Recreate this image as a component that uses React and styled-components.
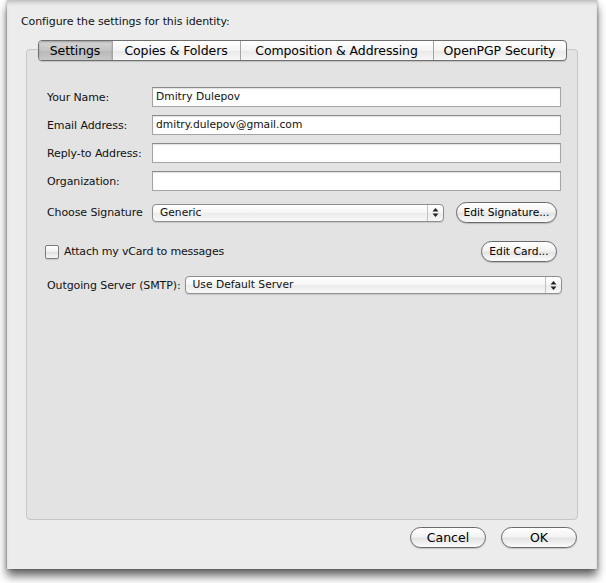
import React from "react";
import styled, { createGlobalStyle } from "styled-components";

const Global = createGlobalStyle`
  html, body { margin: 0; padding: 0; background: #ffffff; }
  body {
    font-family: "DejaVu Sans", "Liberation Sans", sans-serif;
    color: #111;
    min-height: 583px;
    padding-bottom: 14px;
  }
  * { box-sizing: border-box; }
`;

const Sheet = styled.div`
  margin-left: 7px;
  width: 590px;
  height: 569px;
  background: #ececec;
  display: flex;
  flex-direction: column;
  padding: 14px 19px 0 19px;
  box-shadow: 0 7px 9px rgba(0, 0, 0, 0.6), 0 0 3px rgba(0, 0, 0, 0.35),
    inset 0 4px 4px -2px rgba(0, 0, 0, 0.22);
`;

const Heading = styled.div`
  font-size: 11px;
  line-height: 16px;
  margin-left: -5px;
  letter-spacing: -0.1px;
`;

const TabArea = styled.div`
  margin-top: 10px;
  flex: 1;
  display: flex;
  flex-direction: column;
`;

const TabBar = styled.div`
  align-self: center;
  display: flex;
  height: 21px;
  margin-bottom: -12px;
  position: relative;
  z-index: 1;
  border: 1px solid #6f6f6f;
  border-radius: 4px;
  overflow: hidden;
  background: linear-gradient(#ffffff, #f4f4f4 50%, #e9e9e9 51%, #f7f7f7);
  box-shadow: 0 1px 1px rgba(0, 0, 0, 0.15);
`;

const Tab = styled.div`
  display: flex;
  align-items: center;
  justify-content: center;
  width: ${(p) => p.$w}px;
  font-size: 12.5px;
  letter-spacing: -0.1px;
  color: #000;
  white-space: nowrap;
  border-left: ${(p) => (p.$first ? "none" : "1px solid #a6a6a6")};
  ${(p) =>
    p.$active &&
    `
    background: linear-gradient(#d6d6d6, #c4c4c4 50%, #b8b8b8 51%, #c9c9c9);
    box-shadow: inset 0 1px 2px rgba(0,0,0,0.25);
  `}
`;

const Panel = styled.div`
  flex: 1;
  background: #e3e3e3;
  border: 1px solid #c6c6c6;
  border-radius: 4px;
  padding: 37px 18px 0 20px;
  display: flex;
  flex-direction: column;
`;

const FieldGrid = styled.div`
  display: grid;
  grid-template-columns: 105px 1fr;
  row-gap: 8px;
  align-items: center;
  margin-right: -2px;
`;

const Label = styled.div`
  font-size: 11px;
  letter-spacing: -0.1px;
  color: #111;
  white-space: nowrap;
`;

const TextField = styled.div`
  height: 20px;
  background: #fff;
  border: 1px solid #a4a4a4;
  border-top-color: #8a8a8a;
  box-shadow: inset 0 1px 1px rgba(0, 0, 0, 0.12);
  font-size: 10.7px;
  line-height: 18px;
  padding-left: 3px;
`;

const Row = styled.div`
  display: flex;
  align-items: center;
  gap: ${(p) => p.$gap || 0}px;
  margin-top: ${(p) => p.$top}px;
  margin-right: ${(p) => p.$right || 0}px;
`;

const SigLabel = styled(Label)`
  width: 105px;
  flex: none;
`;

const Popup = styled.div`
  height: 18px;
  flex: ${(p) => (p.$grow ? 1 : "none")};
  width: ${(p) => (p.$w ? `${p.$w}px` : "auto")};
  display: flex;
  align-items: stretch;
  border: 1px solid #8e8e8e;
  border-radius: 4px;
  background: linear-gradient(#ffffff, #f6f6f6 50%, #ebebeb 52%, #f8f8f8);
  box-shadow: 0 1px 1px rgba(0, 0, 0, 0.12);
  font-size: 10.7px;
`;

const PopupText = styled.div`
  flex: 1;
  padding-left: 7px;
  line-height: 16px;
`;

const PopupArrows = styled.div`
  width: 16px;
  border-left: 1px solid #c2c2c2;
  display: flex;
  align-items: center;
  justify-content: center;
`;

const PillButton = styled.div`
  height: 21px;
  width: ${(p) => p.$w}px;
  display: flex;
  align-items: center;
  justify-content: center;
  border: 1px solid #6a6a6a;
  border-radius: 11px;
  background: linear-gradient(#ffffff, #f3f3f3 45%, #e4e4e4 55%, #fbfbfb);
  box-shadow: 0 1px 1px rgba(0, 0, 0, 0.18);
  font-size: ${(p) => p.$size || 10.7}px;
  color: #000;
  white-space: nowrap;
  flex: none;
`;

const Spacer = styled.div`
  flex: 1;
`;

const Check = styled.div`
  width: 14px;
  height: 14px;
  margin-left: -2px;
  border: 1px solid #7d7d7d;
  border-radius: 2px;
  background: linear-gradient(#ffffff, #f0f0f0 50%, #e2e2e2 52%, #f6f6f6);
  box-shadow: 0 1px 1px rgba(0, 0, 0, 0.12);
  flex: none;
`;

const CheckLabel = styled.div`
  font-size: 11px;
  letter-spacing: -0.2px;
`;

const Footer = styled.div`
  height: 49px;
  display: flex;
  justify-content: flex-end;
  align-items: flex-start;
  gap: 15px;
  padding-top: 7px;
  padding-right: 1px;
`;

function Arrows() {
  return (
    <svg width="7" height="11" viewBox="0 0 7 11">
      <path d="M3.5 1 L6.5 4.5 L0.5 4.5 Z" fill="#222" />
      <path d="M3.5 10 L6.5 6.5 L0.5 6.5 Z" fill="#222" />
    </svg>
  );
}

const tabs = [
  { name: "Settings", w: 73, active: true },
  { name: "Copies & Folders", w: 128 },
  { name: "Composition & Addressing", w: 193 },
  { name: "OpenPGP Security", w: 133 },
];

const fields = [
  ["Your Name:", "Dmitry Dulepov"],
  ["Email Address:", "dmitry.dulepov@gmail.com"],
  ["Reply-to Address:", ""],
  ["Organization:", ""],
];

export default function App() {
  return (
    <>
      <Global />
      <Sheet>
        <Heading>Configure the settings for this identity:</Heading>
        <TabArea>
          <TabBar>
            {tabs.map((t, i) => (
              <Tab key={t.name} $first={i === 0} $active={t.active} $w={t.w}>
                {t.name}
              </Tab>
            ))}
          </TabBar>
          <Panel>
            <FieldGrid>
              {fields.map(([label, value]) => (
                <React.Fragment key={label}>
                  <Label>{label}</Label>
                  <TextField>{value}</TextField>
                </React.Fragment>
              ))}
            </FieldGrid>
            <Row $top={11} $right={2}>
              <SigLabel>Choose Signature</SigLabel>
              <Popup $w={292}>
                <PopupText>Generic</PopupText>
                <PopupArrows>
                  <Arrows />
                </PopupArrows>
              </Popup>
              <Spacer />
              <PillButton $w={101}>Edit Signature...</PillButton>
            </Row>
            <Row $top={18} $gap={5} $right={2}>
              <Check />
              <CheckLabel>Attach my vCard to messages</CheckLabel>
              <Spacer />
              <PillButton $w={76}>Edit Card...</PillButton>
            </Row>
            <Row $top={14} $gap={4} $right={-3}>
              <Label>Outgoing Server (SMTP):</Label>
              <Popup $grow>
                <PopupText>Use Default Server</PopupText>
                <PopupArrows>
                  <Arrows />
                </PopupArrows>
              </Popup>
            </Row>
          </Panel>
        </TabArea>
        <Footer>
          <PillButton $w={76} $size={12.5}>Cancel</PillButton>
          <PillButton $w={76} $size={12.5}>OK</PillButton>
        </Footer>
      </Sheet>
    </>
  );
}
